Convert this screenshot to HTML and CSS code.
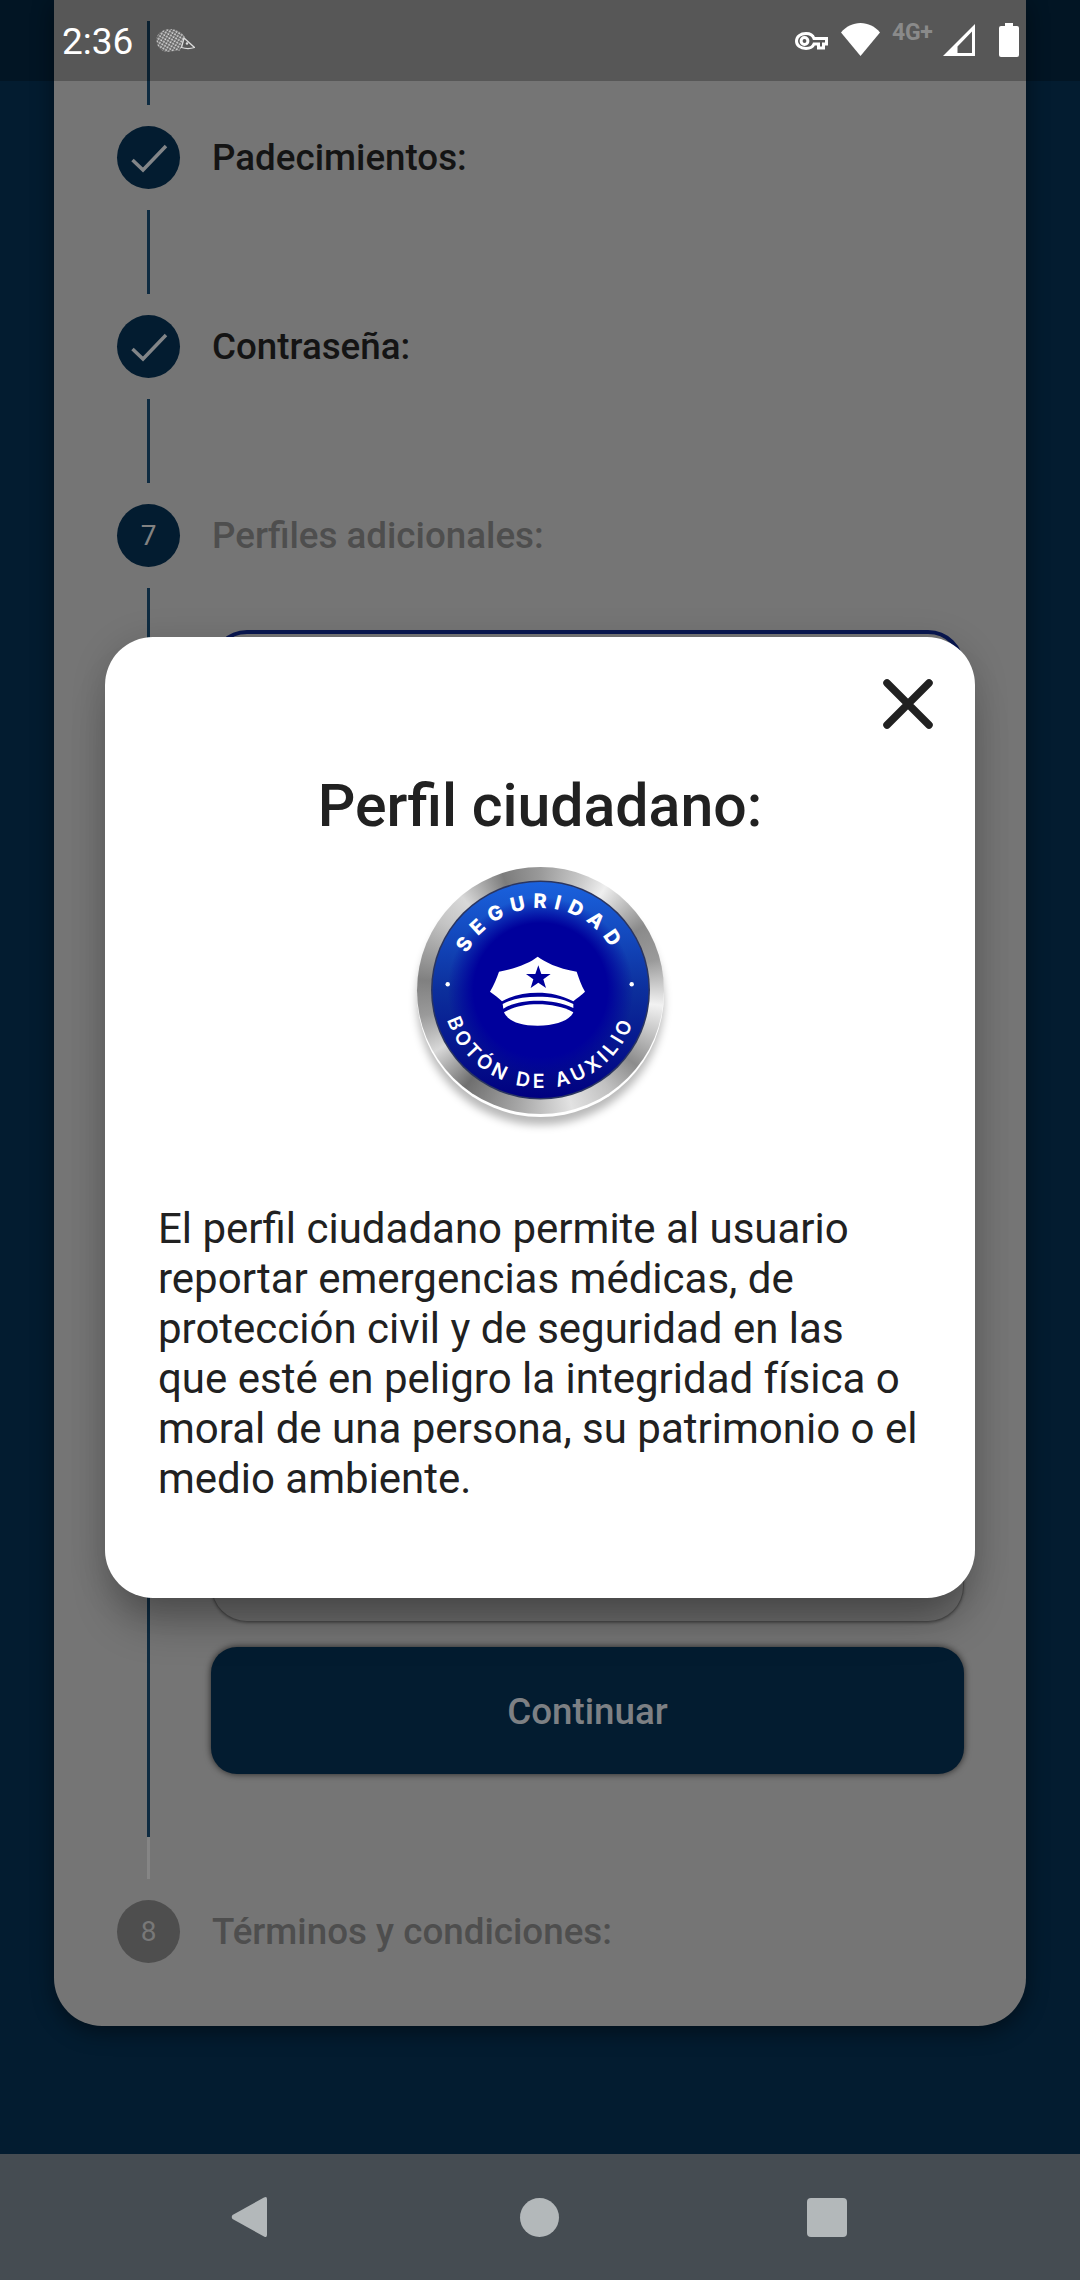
FILE: index.html
```html
<!DOCTYPE html>
<html lang="es">
<head>
<meta charset="utf-8">
<title>Perfil ciudadano</title>
<link rel="stylesheet" href="styles.css">
</head>
<body>
<div class="screen">
  <main class="backdrop">
    <section class="card">
      <div class="connector"></div>
      <div class="step">
        <span class="dot dot-dark">
          <svg class="check" viewBox="0 0 63 63"><polyline points="15.5,34 26,44 49,20"/></svg>
        </span>
        <span class="label label-done">Padecimientos:</span>
      </div>
      <div class="connector"></div>
      <div class="step">
        <span class="dot dot-dark">
          <svg class="check" viewBox="0 0 63 63"><polyline points="15.5,34 26,44 49,20"/></svg>
        </span>
        <span class="label label-done">Contraseña:</span>
      </div>
      <div class="connector"></div>
      <div class="step">
        <span class="dot dot-dark">7</span>
        <span class="label">Perfiles adicionales:</span>
      </div>
      <div class="step-body">
        <div class="rail">
          <div class="rail-dark"></div>
          <div class="rail-grey"></div>
        </div>
        <div class="step-content">
          <div class="profile profile-selected"></div>
          <div class="profile profile-other"></div>
          <button class="continue" type="button">Continuar</button>
        </div>
      </div>
      <div class="step">
        <span class="dot dot-grey">8</span>
        <span class="label">Términos y condiciones:</span>
      </div>
    </section>
  </main>

  <nav class="navbar">
    <svg class="nav-back" viewBox="0 0 36 42"><path d="M33 1.5 Q36 0 36 3 V39 Q36 42 33 40.5 L1.5 23 Q0 21 1.5 19 Z"/></svg>
    <span class="nav-home"></span>
    <span class="nav-recent"></span>
  </nav>

  <header class="statusbar">
    <span class="time">2:36</span>
    <svg class="hedgehog" viewBox="0 0 39 23">
      <defs>
        <pattern id="quills" width="3" height="3" patternUnits="userSpaceOnUse" patternTransform="rotate(30)">
          <rect x="0.3" y="0.3" width="1.9" height="1.9" fill="#dcdcdc"/>
        </pattern>
      </defs>
      <path fill="url(#quills)" d="M0.5 11 C0.5 4 7 0 14 0 C21 0 26 3 29 8.5 L26 16 L24 21.5 L10 23 C4 21 0.5 17 0.5 11 Z"/>
      <path class="hedgehog-face" d="M28 9 L38.5 18.5 C34 20 30 20 25.5 18.5 Z"/>
      <circle cx="31" cy="14.5" r="1.2" fill="#dcdcdc"/>
    </svg>
    <span class="status-right">
      <svg class="st-key" viewBox="0 0 33 18"><path d="M11 1.5 C15 1.5 18 3.7 19 6.5 H31.5 V12 H28.5 V16 H23.5 V12 H19 C18 14.5 15 16.5 11 16.5 C5.5 16.5 1.5 13.5 1.5 9 C1.5 4.5 5.5 1.5 11 1.5 Z"/><circle cx="9.5" cy="9" r="3.4"/></svg>
      <svg class="st-wifi" viewBox="0 0 39 33"><path d="M0 9.5 C5 3.5 12 0 19.5 0 C27 0 34 3.5 39 9.5 L19.5 33 Z"/></svg>
      <span class="st-network">4G+</span>
      <svg class="st-signal" viewBox="0 0 32 32"><path fill-rule="evenodd" d="M32 0 V32 H0 Z M29 7.5 L14.5 22.5 V29 H29 Z"/></svg>
      <svg class="st-battery" viewBox="0 0 20 34"><path d="M6 0 H14 V3 H18 Q20 3 20 5 V32 Q20 34 18 34 H2 Q0 34 0 32 V5 Q0 3 2 3 H6 Z"/></svg>
    </span>
  </header>

  <div class="modal">
    <svg class="close" viewBox="0 0 50 50"><path d="M4 4 L46 46 M46 4 L4 46"/></svg>
    <h1 class="modal-title">Perfil ciudadano:</h1>
    <div class="badge">
      <span class="badge-shadow"></span>
      <span class="badge-ring"></span>
      <svg class="badge-art" viewBox="0 0 320 300">
        <defs>
          <linearGradient id="faceBase" x1="0" y1="0" x2="0" y2="1">
            <stop offset="0" stop-color="#1a62de"/>
            <stop offset="0.5" stop-color="#0c2f9c"/>
            <stop offset="1" stop-color="#000080"/>
          </linearGradient>
          <radialGradient id="faceGlow" cx="0.5" cy="0.5" r="0.5">
            <stop offset="0" stop-color="#00009c"/>
            <stop offset="0.62" stop-color="#00009c"/>
            <stop offset="0.86" stop-color="#00009c" stop-opacity="0"/>
          </radialGradient>
          <path id="arcTop" d="M78.5 150 A82 82 0 0 1 242.5 150"/>
          <path id="arcBottom" d="M62.5 150 A98 98 0 0 0 258.5 150"/>
        </defs>
        <circle cx="160.5" cy="150" r="109.5" fill="#2a3560"/>
        <circle cx="160.5" cy="150" r="108" fill="url(#faceBase)"/>
        <circle cx="160.5" cy="150" r="108" fill="url(#faceGlow)"/>
        <text class="badge-text badge-text-top"><textPath href="#arcTop" startOffset="50%" text-anchor="middle">SEGURIDAD</textPath></text>
        <text class="badge-text badge-text-bottom"><textPath href="#arcBottom" startOffset="50%" text-anchor="middle">BOTÓN DE AUXILIO</textPath></text>
        <circle cx="67.7" cy="144.3" r="2.2" fill="#fff"/>
        <circle cx="251.7" cy="144.3" r="2.2" fill="#fff"/>
        <g transform="scale(0.33333)">
          <path fill="#fff" d="M473 350 C495 365 530 385 590 395 C597 415 603 435 615 455 C605 465 590 475 580 484 C545 465 510 458 473 458 C436 458 400 465 366 484 C355 472 342 465 330 455 C342 435 350 415 357 395 C410 385 450 368 473 350 Z"/>
          <path fill="#fff" d="M368 492 C400 475 435 470 473 470 C512 470 548 475 580 492 L580 504 C548 488 512 482 473 482 C435 482 400 488 370 506 Z"/>
          <path fill="#fff" d="M372 517 C400 500 435 493 473 493 C512 493 550 500 580 517 C570 540 530 557 473 557 C415 557 382 540 372 517 Z"/>
          <path fill="#00009c" d="M475 376 L484 402 L512 402 L490 418 L498 444 L475 428 L452 444 L460 418 L438 402 L466 402 Z"/>
        </g>
      </svg>
    </div>
    <p class="modal-text">El perfil ciudadano permite al usuario reportar emergencias médicas, de protección civil y de seguridad en las que esté en peligro la integridad física o moral de una persona, su patrimonio o el medio ambiente.</p>
  </div>
</div>
</body>
</html>
```

FILE: styles.css
```css
* { box-sizing: border-box; }

html, body {
  margin: 0;
  padding: 0;
}

body {
  font-family: Roboto, "Liberation Sans", sans-serif;
}

.screen {
  position: relative;
  width: 1080px;
  height: 2280px;
  display: flex;
  flex-direction: column;
  background: #031c30;
  overflow: hidden;
}

.backdrop {
  flex: 1;
  padding: 0 54px;
}

.card {
  height: 2026px;
  padding: 21px 0 62px 63px;
  background: #757575;
  border-radius: 0 0 48px 48px;
  box-shadow: 0 6px 22px rgba(0, 0, 0, 0.45);
}

.connector {
  width: 3px;
  height: 84px;
  margin: 0 0 21px 30px;
  background: #0e2b41;
}

.step + .connector {
  margin-top: 21px;
}

.step {
  display: flex;
  align-items: center;
  gap: 32px;
  height: 63px;
}

.dot {
  flex: none;
  width: 63px;
  height: 63px;
  display: flex;
  align-items: center;
  justify-content: center;
  border-radius: 50%;
  font-size: 28px;
  color: #828282;
}

.dot-dark { background: #031c30; }

.dot-grey {
  background: #4e4e4e;
  color: #787878;
}

.check {
  width: 63px;
  height: 63px;
  fill: none;
  stroke: #828588;
  stroke-width: 3.5;
}

.label {
  font-size: 36.75px;
  font-weight: 500;
  color: #4e4e4e;
}

.label-done { color: #141414; }

.step-body {
  display: flex;
  margin: 21px 0;
  height: 1291px;
}

.rail {
  display: flex;
  flex-direction: column;
  width: 3px;
  margin-left: 30px;
}

.rail-dark {
  flex: 1;
  background: #0e2b41;
}

.rail-grey {
  height: 42px;
  background: #858585;
}

.step-content {
  flex: 1;
  display: flex;
  flex-direction: column;
  margin: 0 62px 0 61px;
  padding-top: 42px;
}

.profile {
  border-radius: 36px;
}

.profile-selected {
  height: 470px;
  border: 4px solid #081650;
}

.profile-other {
  height: 502px;
  margin-top: 20px;
  border: 1px solid rgba(0, 0, 0, 0.3);
  box-shadow: 0 1px 3px rgba(0, 0, 0, 0.35);
  background: rgba(0, 0, 0, 0.06);
}

.continue {
  height: 127px;
  margin-top: 25px;
  padding: 2px 0 0;
  border: none;
  border-radius: 26px;
  background: #031c30;
  box-shadow: 0 0 7px rgba(0, 0, 0, 0.7);
  font-family: inherit;
  font-size: 36.75px;
  font-weight: 500;
  color: #7d8084;
}

.navbar {
  flex: none;
  height: 126px;
  display: flex;
  align-items: center;
  background: #454c52;
  padding: 0 0 0 231px;
}

.nav-back {
  width: 36px;
  height: 42px;
  fill: #b3b8ba;
  margin-right: 253px;
}

.nav-home {
  width: 39px;
  height: 39px;
  border-radius: 50%;
  background: #b3b8ba;
  margin-right: 248px;
}

.nav-recent {
  width: 40px;
  height: 39px;
  border-radius: 4px;
  background: #b3b8ba;
}

.statusbar {
  position: absolute;
  top: 0;
  left: 0;
  width: 1080px;
  height: 81px;
  display: flex;
  align-items: flex-start;
  padding: 0 61px 0 62px;
  background: rgba(0, 0, 0, 0.25);
}

.time {
  font-size: 37px;
  line-height: 84px;
  color: #fff;
  width: 94px;
}

.hedgehog {
  width: 39px;
  height: 23px;
  margin-top: 29px;
}

.hedgehog-face {
  fill: none;
  stroke: #dcdcdc;
  stroke-width: 1.3;
}

.status-right {
  margin-left: auto;
  display: flex;
  align-items: flex-start;
}

.st-key {
  width: 33px;
  height: 18px;
  margin: 32px 13px 0 0;
  fill: none;
  stroke: #fff;
  stroke-width: 3;
}

.st-wifi {
  width: 39px;
  height: 33px;
  margin: 23px 12px 0 0;
  fill: #fff;
}

.st-network {
  width: 51px;
  margin-top: 20px;
  font-size: 23px;
  line-height: 26px;
  font-weight: 700;
  color: #8a8a8a;
  letter-spacing: -0.3px;
}

.st-signal {
  width: 32px;
  height: 32px;
  margin: 24px 24px 0 0;
  fill: #fff;
}

.st-battery {
  width: 20px;
  height: 34px;
  margin-top: 23px;
  fill: #fff;
}

.modal {
  position: absolute;
  top: 637px;
  left: 105px;
  width: 870px;
  height: 961px;
  display: flex;
  flex-direction: column;
  align-items: center;
  padding: 42px 42px 0 53px;
  background: #fff;
  border-radius: 48px;
  box-shadow: 0 34px 44px -12px rgba(0, 0, 0, 0.3), 0 4px 36px rgba(0, 0, 0, 0.14);
}

.close {
  flex: none;
  align-self: flex-end;
  width: 50px;
  height: 50px;
  fill: none;
  stroke: #212121;
  stroke-width: 7.5;
  stroke-linecap: round;
}

.modal-title {
  margin: 43px 0 0 -11px;
  font-size: 59px;
  line-height: 68px;
  font-weight: 500;
  color: #212121;
}

.badge {
  flex: none;
  display: grid;
  width: 320px;
  height: 300px;
  margin: 0 0 0 -11px;
}

.badge > * {
  grid-area: 1 / 1;
}

.badge-shadow {
  place-self: start;
  width: 247px;
  height: 247px;
  margin: 30px 0 0 37px;
  border-radius: 50%;
  box-shadow: 0 8px 9px rgba(0, 0, 0, 0.28);
}

.badge-ring {
  place-self: start;
  width: 247px;
  height: 247px;
  margin: 26.5px 0 0 37px;
  border-radius: 50%;
  background: conic-gradient(#9a9a9a 0deg, #c9c9c9 20deg, #efefef 32deg, #8a8a8a 58deg, #9a9a9a 75deg, #f2f2f2 97deg, #8c8c8c 128deg, #c0c0c0 145deg, #e2e2e2 165deg, #a8a8a8 190deg, #6f6f6f 218deg, #d8d8d8 240deg, #9a9a9a 258deg, #808080 275deg, #c4c4c4 305deg, #d8d8d8 320deg, #7c7c7c 342deg, #9a9a9a 360deg);
}

.badge-art {
  width: 320px;
  height: 300px;
}

.badge-text {
  font-family: Inter, "Open Sans", sans-serif;
  fill: #fff;
}

.badge-text-top {
  font-size: 20px;
  font-weight: 800;
  letter-spacing: 7.2px;
}

.badge-text-bottom {
  font-size: 19.5px;
  font-weight: 600;
  letter-spacing: 3.9px;
}

.modal-text {
  align-self: flex-start;
  width: 762px;
  margin: 64px 0 0 0;
  font-size: 42px;
  line-height: 50px;
  color: #212121;
}
```
